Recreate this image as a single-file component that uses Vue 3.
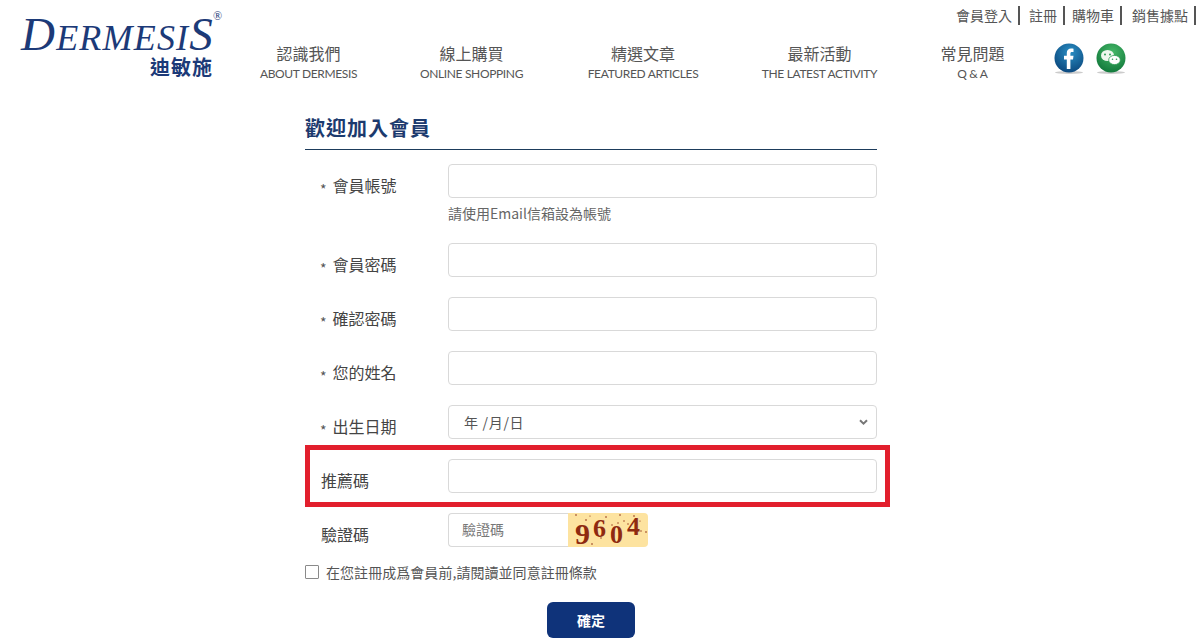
<script setup>
const topLinks = ['會員登入', '註冊', '購物車', '銷售據點']
const nav = [
  { zh: '認識我們', en: 'ABOUT DERMESIS', w: 163 },
  { zh: '線上購買', en: 'ONLINE SHOPPING', w: 163 },
  { zh: '精選文章', en: 'FEATURED ARTICLES', w: 180 },
  { zh: '最新活動', en: 'THE LATEST ACTIVITY', w: 173 },
  { zh: '常見問題', en: 'Q & A', w: 133 }
]
const fields = [
  { label: '會員帳號', req: true, hint: '請使用Email信箱設為帳號' },
  { label: '會員密碼', req: true },
  { label: '確認密碼', req: true },
  { label: '您的姓名', req: true }
]
</script>

<template>
  <div class="page">
    <header class="header">
      <div class="logo">
        <div class="logo-en"><span class="cap">D</span>ERMESI<span class="cap">S</span><sup class="reg">®</sup></div>
        <div class="logo-zh">迪敏施</div>
      </div>
      <div class="header-right">
        <div class="toplinks">
          <a v-for="t in topLinks" :key="t" class="toplink">{{ t }}</a>
        </div>
        <div class="navrow">
          <nav class="nav">
            <a v-for="n in nav" :key="n.en" class="nav-item" :style="{ width: n.w + 'px' }">
              <span class="zh">{{ n.zh }}</span>
              <span class="en">{{ n.en }}</span>
            </a>
          </nav>
          <div class="social">
            <svg width="32" height="34" viewBox="0 0 32 34">
              <defs>
                <radialGradient id="fbg" cx="55%" cy="30%" r="70%">
                  <stop offset="0" stop-color="#2a8fc4" />
                  <stop offset="1" stop-color="#0c4a80" />
                </radialGradient>
                <radialGradient id="wcg" cx="55%" cy="30%" r="70%">
                  <stop offset="0" stop-color="#45b868" />
                  <stop offset="1" stop-color="#137a3c" />
                </radialGradient>
              </defs>
              <ellipse cx="16" cy="29.500" rx="14" ry="1.500" fill="#aaa" opacity=".6" />
              <circle cx="16" cy="15" r="14.500" fill="url(#fbg)" />
              <path d="M13.800 26V16.500h-2.800v-3.700h2.800v-2.700c0-3 1.800-4.500 4.300-4.500 1.100 0 2 .1 2.400.2v3.300h-1.600c-1.200 0-1.500.6-1.500 1.500v2.200h3.100l-.5 3.700h-2.600V26z" fill="#fff" />
            </svg>
            <svg width="32" height="34" viewBox="0 0 32 34">
              <ellipse cx="16" cy="29.500" rx="14" ry="1.500" fill="#aaa" opacity=".6" />
              <circle cx="16" cy="15" r="14.500" fill="url(#wcg)" />
              <ellipse cx="12.500" cy="12.500" rx="6.500" ry="5.500" fill="#eef7ee" />
              <ellipse cx="19.500" cy="17" rx="5.800" ry="4.600" fill="#fff" stroke="#2f9d55" stroke-width=".8" />
              <circle cx="10" cy="11.500" r="1" fill="#2f9d55" />
              <circle cx="15" cy="11.500" r="1" fill="#2f9d55" />
              <circle cx="17.500" cy="16.300" r=".8" fill="#2f9d55" />
              <circle cx="21.500" cy="16.300" r=".8" fill="#2f9d55" />
            </svg>
          </div>
        </div>
      </div>
    </header>

    <main class="main">
      <form class="form" @submit.prevent>
        <h2 class="title">歡迎加入會員</h2>

        <div v-for="f in fields" :key="f.label" class="row">
          <label class="label"><span class="star">*</span>{{ f.label }}</label>
          <div class="control">
            <input class="input" type="text" />
            <p v-if="f.hint" class="hint">{{ f.hint }}</p>
          </div>
        </div>

        <div class="row">
          <label class="label"><span class="star">*</span>出生日期</label>
          <div class="control">
            <div class="input select">
              <span>年 /月/日</span>
              <svg width="9" height="6" viewBox="0 0 9 6"><path d="M1 1.200 4.500 4.600 8 1.200" fill="none" stroke="#777" stroke-width="2" /></svg>
            </div>
          </div>
        </div>

        <div class="row highlighted">
          <label class="label plain">推薦碼</label>
          <div class="control"><input class="input" type="text" /></div>
          <div class="redbox"></div>
        </div>

        <div class="row">
          <label class="label plain">驗證碼</label>
          <div class="control captcha-wrap">
            <input class="captcha-input" type="text" placeholder="驗證碼" />
            <div class="captcha">
              <span class="d d1">9</span><span class="d d2">6</span><span class="d d3">0</span><span class="d d4">4</span>
              <svg class="noise" width="80" height="34" viewBox="0 0 80 34">
                <g fill="#8a2a12">
                  <circle cx="8" cy="2" r=".8" /><circle cx="18" cy="7" r=".8" /><circle cx="22" cy="3" r=".6" />
                  <circle cx="38" cy="4" r=".8" /><circle cx="52" cy="2" r=".8" /><circle cx="50" cy="10" r=".7" />
                  <circle cx="56" cy="8" r=".7" /><circle cx="60" cy="11" r=".7" /><circle cx="66" cy="3" r=".8" />
                  <circle cx="72" cy="8" r=".6" /><circle cx="73" cy="18" r=".7" /><circle cx="78" cy="19" r=".8" />
                  <circle cx="24" cy="31" r=".8" /><circle cx="44" cy="12" r=".7" /><circle cx="33" cy="25" r=".7" />
                </g>
              </svg>
            </div>
          </div>
        </div>

        <label class="agree">
          <span class="box"></span>
          <span class="agree-text">在您註冊成爲會員前,請閱讀並同意註冊條款</span>
        </label>

        <div class="actions">
          <button class="submit" type="submit">確定</button>
        </div>
      </form>
    </main>
  </div>
</template>

<style>
html, body { margin: 0; background: #fff; }
</style>

<style scoped>
.page {
  width: 1199px;
  height: 644px;
  overflow: hidden;
  font-family: "Noto Sans CJK TC", "Liberation Sans", sans-serif;
  color: #444;
}
.header {
  display: flex;
  height: 100px;
  box-sizing: border-box;
}
.logo {
  width: 228px;
  flex: none;
  box-sizing: border-box;
  padding: 12px 0 0 21px;
  color: #1c3a78;
}
.logo-en {
  font-family: "Liberation Serif", serif;
  font-style: italic;
  font-size: 36px;
  line-height: 44px;
  height: 44px;
  letter-spacing: 1.200px;
  white-space: nowrap;
  position: relative;
}
.cap { font-size: 47px; }
.reg {
  position: absolute;
  left: 192px;
  top: -3px;
  font-size: 12px;
  line-height: 14px;
  font-style: normal;
  letter-spacing: 0;
}
.logo-zh {
  font-family: "Noto Sans CJK TC", sans-serif;
  font-weight: 700;
  font-size: 20px;
  line-height: 24px;
  margin-left: 129px;
  margin-top: -1px;
  letter-spacing: 1px;
  white-space: nowrap;
}
.header-right { flex: 1; display: flex; flex-direction: column; }
.toplinks {
  display: flex;
  justify-content: flex-end;
  padding: 6px 3px 0 0;
  height: 20px;
}
.toplink {
  font-size: 14px;
  line-height: 19px;
  height: 19px;
  color: #555;
  padding: 0 6px 0 8px;
  border-right: 2px solid #555;
  white-space: nowrap;
}
.toplink:nth-child(2) { padding-left: 9px; }
.toplink:nth-child(3) { padding-left: 7px; }
.toplink:last-child { padding-left: 10px; }
.navrow {
  display: flex;
  align-items: flex-start;
  margin-top: 17px;
}
.nav { display: flex; margin-left: -1px; }
.nav-item {
  display: flex;
  flex-direction: column;
  align-items: center;
  flex: none;
}
.zh { font-size: 16px; line-height: 20px; color: #555; white-space: nowrap; }
.en {
  font-size: 12px;
  letter-spacing: -.35px;
  line-height: 16px;
  margin-top: 3px;
  color: #555;
  white-space: nowrap;
  font-family: "Lato", sans-serif;
}
.social {
  display: flex;
  gap: 10px;
  margin-left: 14px;
  margin-top: 0;
}
.main { display: flex; padding-left: 305px; }
.form { width: 572px; }
.title {
  margin: 0;
  font-size: 20px;
  font-weight: 700;
  line-height: 28px;
  box-sizing: border-box;
  padding-top: 14px;
  border-bottom: 1px solid #1d3c5c;
  color: #1c3a6e;
  letter-spacing: 1px;
  height: 50px;
}
.row {
  display: flex;
  margin-top: 14px;
  height: 40px;
  position: relative;
}
.row:first-of-type { margin-top: 14px; height: 65px; }
.label {
  width: 143px;
  flex: none;
  box-sizing: border-box;
  padding: 10px 0 0 15px;
  font-size: 16px;
  line-height: 22px;
  color: #444;
  white-space: nowrap;
}
.star { font-size: 14px; margin-right: 6px; color: #555; position: relative; top: 3px; }
.label.plain { padding-left: 16px; }
.control { flex: 1; }
.input {
  display: flex;
  width: 100%;
  height: 34px;
  box-sizing: border-box;
  border: 1px solid #d9d9d9;
  border-radius: 4px;
  background: #fff;
  padding: 0 12px;
  font-size: 14px;
  outline: none;
}
.select {
  align-items: center;
  justify-content: space-between;
  padding: 0 8px 0 15px;
  font-size: 14px;
  color: #555;
  letter-spacing: .7px;
}
.hint {
  margin: 5px 0 0;
  font-size: 14px;
  line-height: 20px;
  color: #666;
}
.row.highlighted { position: relative; }
.redbox {
  position: absolute;
  left: 0;
  top: -14px;
  width: 585px;
  height: 62px;
  box-sizing: border-box;
  border: 5px solid #e21f2d;
  pointer-events: none;
}
.captcha-wrap { display: flex; }
.captcha-input {
  width: 120px;
  height: 34px;
  box-sizing: border-box;
  border: 1px solid #d9d9d9;
  border-right: none;
  border-radius: 4px 0 0 4px;
  padding: 0 13px 2px;
  font-size: 14px;
  font-family: inherit;
  outline: none;
}
.captcha-input::placeholder { color: #777; opacity: 1; }
.captcha {
  width: 80px;
  height: 34px;
  background: #fde3a0;
  border-radius: 0 4px 4px 0;
  display: flex;
  position: relative;
  padding-left: 6px;
  box-sizing: border-box;
  font-family: "Liberation Serif", serif;
  font-weight: 700;
  color: #8f2a10;
  font-size: 27px;
}
.d { display: block; width: 17px; height: 24px; text-align: center; line-height: 24px; }
.d1 { margin-top: 9px; font-size: 30px; }
.d2 { margin-top: 4px; font-size: 26px; }
.d3 { margin-top: 10px; font-size: 26px; }
.d4 { margin-top: 2px; font-size: 26px; }
.noise { position: absolute; left: 0; top: 0; }
.agree {
  display: flex;
  align-items: center;
  gap: 7px;
  margin-top: 8px;
  height: 22px;
  font-size: 14px;
  color: #555;
  white-space: nowrap;
}
.agree-text { letter-spacing: .05px; }
.box {
  width: 12px;
  height: 12px;
  border: 1px solid #8a8a8a;
  border-radius: 1px;
  flex: none;
}
.actions { display: flex; justify-content: center; margin-top: 19px; }
.submit {
  width: 88px;
  height: 36px;
  border: none;
  border-radius: 6px;
  background: #0f337a;
  color: #fff;
  font-family: inherit;
  font-size: 14px;
  font-weight: 700;
}
</style>
